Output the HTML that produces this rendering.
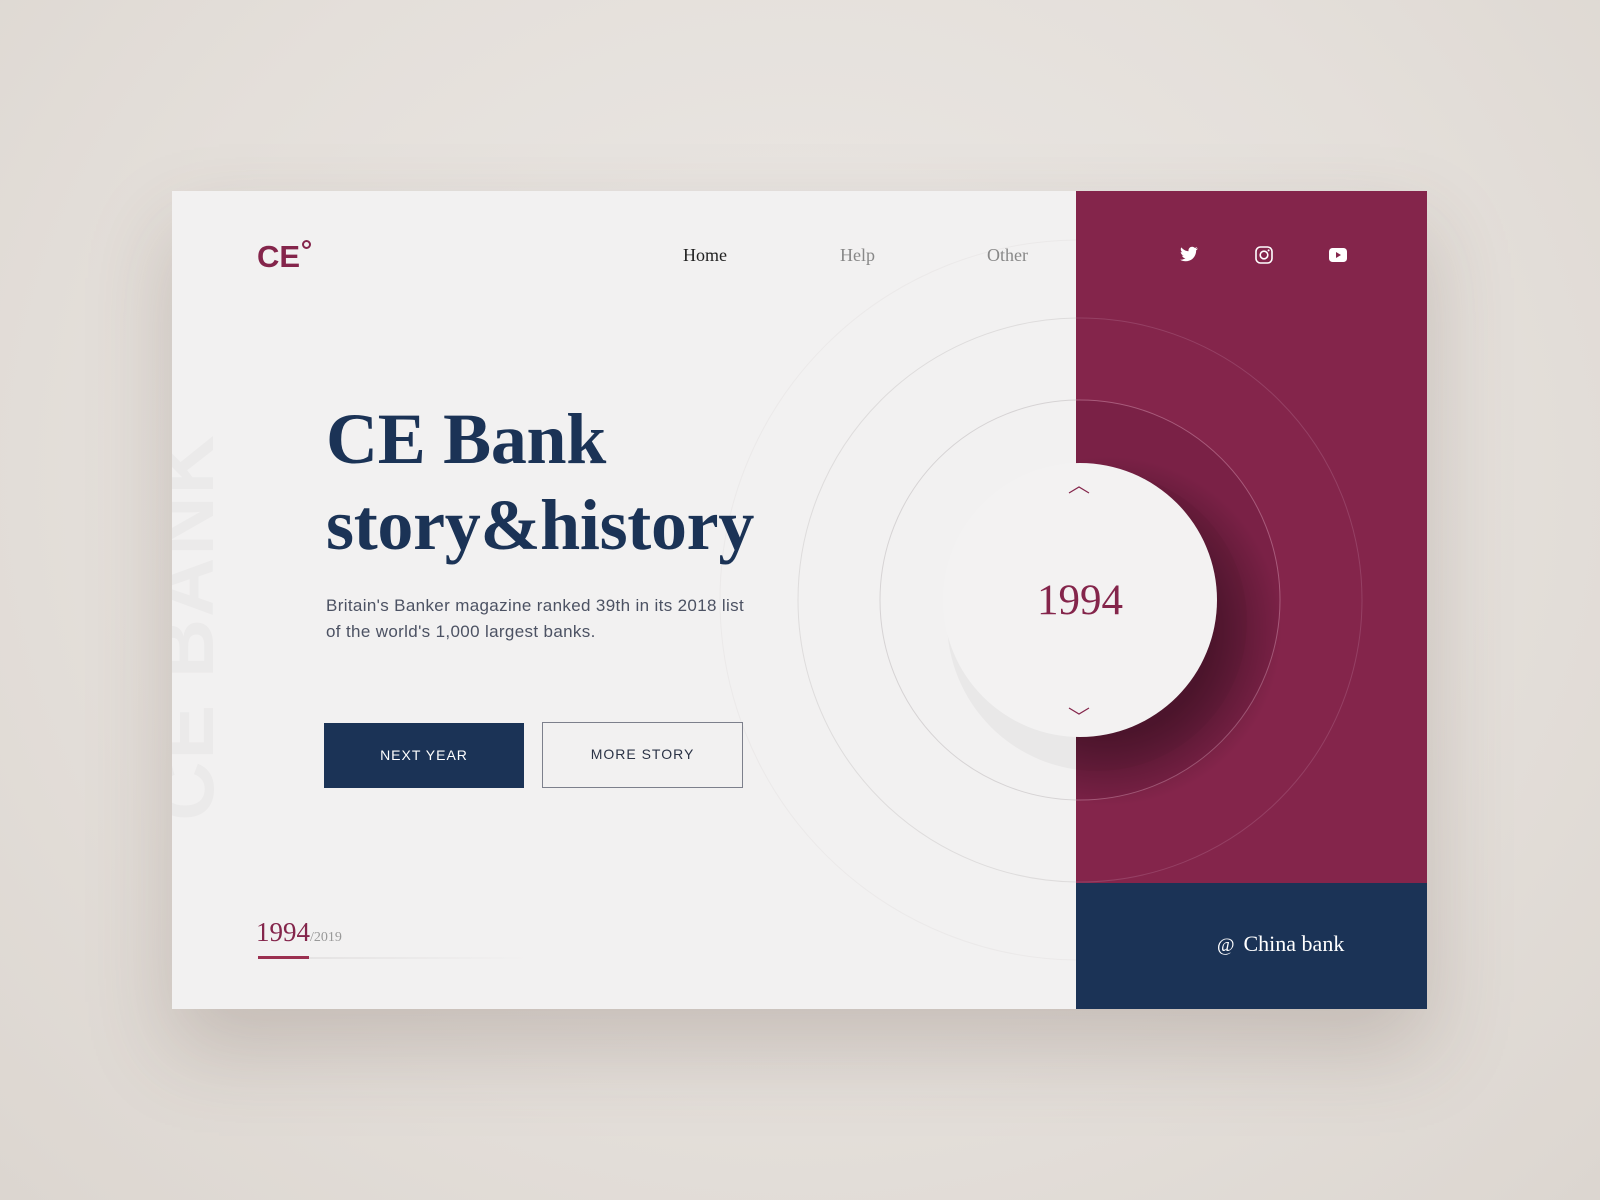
<!DOCTYPE html>
<html><head><meta charset="utf-8"><style>
*{margin:0;padding:0;box-sizing:border-box}
body{width:1600px;height:1200px;background:radial-gradient(ellipse at 50% 40%,#ece9e6 0%,#e4dfda 60%,#dcd6d0 100%);position:relative;overflow:hidden;font-family:"Liberation Sans",sans-serif}
.card{position:absolute;left:172px;top:191px;width:1255px;height:818px;background:#f2f1f1;box-shadow:0 40px 80px rgba(90,70,60,.22);overflow:hidden}
.red{position:absolute;left:904px;top:0;width:351px;height:692px;background:#84254b}
.navy{position:absolute;left:904px;top:692px;width:351px;height:126px;background:#1b3356}
.abs{position:absolute}
.serif{font-family:"Liberation Serif",serif}
</style></head><body>
<div class="card">
<div class="red"></div>
<div class="navy"></div>
<svg class="abs" style="left:0;top:0" width="1255" height="818">
<defs>
<clipPath id="cr"><rect x="904" y="0" width="351" height="692"/></clipPath>
<clipPath id="cl"><rect x="0" y="0" width="904" height="818"/></clipPath>
<radialGradient id="sh" cx="0.5" cy="0.5" r="0.5"><stop offset="0.6" stop-color="#000" stop-opacity=".35"/><stop offset="1" stop-color="#000" stop-opacity="0"/></radialGradient>
</defs>
<g clip-path="url(#cl)">
<circle cx="908" cy="409" r="360" fill="none" stroke="#ebe9e9" stroke-width="1"/>
<circle cx="908" cy="409" r="282" fill="none" stroke="#dedcdc" stroke-width="1"/>
<circle cx="908" cy="409" r="200" fill="none" stroke="#d6d3d4" stroke-width="1"/>
</g>
<g clip-path="url(#cr)">
<circle cx="908" cy="409" r="282" fill="none" stroke="#954064" stroke-width="1"/>
<circle cx="908" cy="409" r="200" fill="#7a2146" stroke="#a85b7b" stroke-width="1"/>
<circle cx="935" cy="440" r="175" fill="url(#sh)"/>
</g>
<circle cx="925" cy="430" r="150" fill="#000" opacity=".035"/>
<circle cx="908" cy="409" r="137" fill="#f3f2f2"/>
<path d="M897 302 L907 296 L917 302" fill="none" stroke="#84254b" stroke-width="1.2"/>
<path d="M897 517 L907 523 L917 517" fill="none" stroke="#84254b" stroke-width="1.2"/>
</svg>
<div class="abs serif" style="left:848px;top:385px;width:120px;text-align:center;font-size:43px;color:#84254b;line-height:50px">1994</div>
<div class="abs" style="left:-16px;top:436px;width:60px;height:1px;">
<div style="position:absolute;left:30px;top:0;transform:translate(-50%,-50%) rotate(-90deg);font-size:82px;font-weight:bold;color:#ebeaea;white-space:nowrap;letter-spacing:2px">CE BANK</div></div>
<div class="abs" style="left:85px;top:48px;font-size:31px;font-weight:bold;color:#84254b">CE</div>
<div class="abs" style="left:130px;top:49px;width:9px;height:9px;border:2.2px solid #84254b;border-radius:50%"></div>
<div class="abs serif" style="left:511px;top:54px;font-size:18px;color:#222">Home</div>
<div class="abs serif" style="left:668px;top:54px;font-size:18px;color:#888">Help</div>
<div class="abs serif" style="left:815px;top:54px;font-size:18px;color:#888">Other</div>
<svg class="abs" style="left:1008px;top:54px" width="18" height="18" viewBox="0 0 24 24"><path fill="#fff" d="M23.6 4.6c-0.9 0.4-1.8 0.6-2.8 0.8 1-0.6 1.8-1.6 2.1-2.7-0.9 0.6-2 1-3.1 1.2-0.9-1-2.2-1.6-3.6-1.6-2.7 0-4.9 2.2-4.9 4.9 0 0.4 0 0.8 0.1 1.1C7.7 8.1 4.1 6.1 1.7 3.1c-0.4 0.7-0.7 1.6-0.7 2.5 0 1.7 0.9 3.2 2.2 4.1-0.8 0-1.6-0.2-2.2-0.6v0.1c0 2.4 1.7 4.4 3.9 4.8-0.4 0.1-0.8 0.2-1.3 0.2-0.3 0-0.6 0-0.9-0.1 0.6 2 2.4 3.4 4.6 3.4-1.7 1.3-3.8 2.1-6.1 2.1-0.4 0-0.8 0-1.2-0.1 2.2 1.4 4.8 2.2 7.5 2.2 9.1 0 14-7.5 14-14v-0.6c1-0.7 1.8-1.6 2.5-2.5z"/></svg>
<svg class="abs" style="left:1083px;top:55px" width="18" height="18" viewBox="0 0 18 18"><rect x="1" y="1" width="16" height="16" rx="4.5" fill="none" stroke="#fff" stroke-width="1.6"/><circle cx="9" cy="9" r="3.8" fill="none" stroke="#fff" stroke-width="1.6"/><circle cx="13.6" cy="4.4" r="1" fill="#fff"/></svg>
<svg class="abs" style="left:1157px;top:57px" width="18" height="14" viewBox="0 0 18 14"><rect x="0" y="0" width="18" height="14" rx="3.5" fill="#fff"/><path d="M7 4 L12 7 L7 10Z" fill="#84254b"/></svg>
<div class="abs serif" style="left:154px;top:205px;font-size:72px;font-weight:bold;color:#1b3356;line-height:86px;letter-spacing:-0.3px">CE Bank<br>story&amp;history</div>
<div class="abs" style="left:154px;top:402px;font-size:17px;color:#4c5263;line-height:26px;letter-spacing:0.35px">Britain's Banker magazine ranked 39th in its 2018 list<br>of the world's 1,000 largest banks.</div>
<div class="abs" style="left:152px;top:532px;width:200px;height:65px;background:#1b3356;color:#fff;font-size:14px;letter-spacing:1px;text-align:center;line-height:65px">NEXT YEAR</div>
<div class="abs" style="left:370px;top:531px;width:201px;height:66px;border:1.5px solid #7d808c;color:#2b3346;font-size:14px;letter-spacing:1px;text-align:center;line-height:63px">MORE STORY</div>
<div class="abs serif" style="left:84px;top:726px;font-size:27px;color:#84254b">1994<span style="font-size:14px;color:#999">/2019</span></div>
<div class="abs" style="left:86px;top:766px;width:270px;height:2px;background:linear-gradient(90deg,#e2e0e0,rgba(226,224,224,0))"></div>
<div class="abs" style="left:86px;top:765px;width:51px;height:3px;background:#9b3050"></div>
<div class="abs serif" style="left:1045px;top:740px;font-size:22px;color:#fff"><span style="font-size:19px;margin-right:9px">@</span>China bank</div>
</div>
</body></html>
